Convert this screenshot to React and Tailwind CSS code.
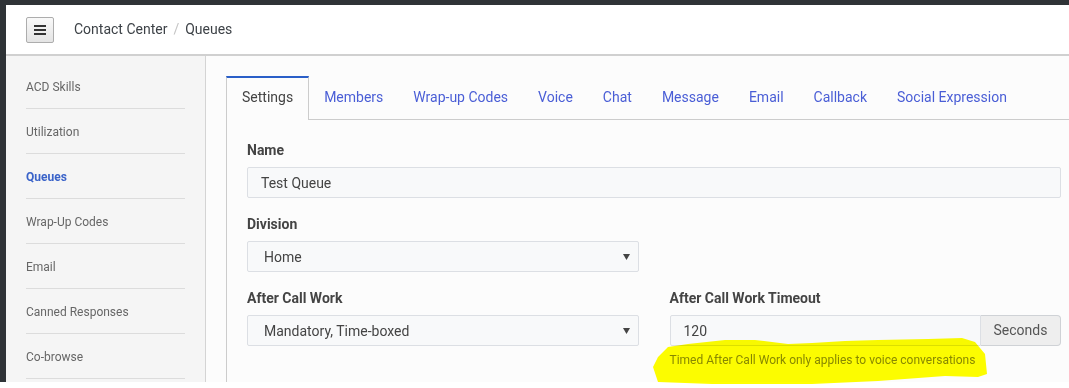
import React from "react";

const sideItems = [
  "ACD Skills",
  "Utilization",
  "Queues",
  "Wrap-Up Codes",
  "Email",
  "Canned Responses",
  "Co-browse",
];

const tabs = [
  "Members",
  "Wrap-up Codes",
  "Voice",
  "Chat",
  "Message",
  "Email",
  "Callback",
  "Social Expression",
];

function Caret() {
  return (
    <svg width="7" height="6" viewBox="0 0 7 6" className="absolute right-[8px] top-1/2 -translate-y-1/2">
      <path d="M0 0 H7 L3.5 6 Z" fill="#444" />
    </svg>
  );
}

function Label({ children }) {
  return (
    <div className="text-[14px] leading-[20px] font-bold text-[#444] mb-[7px]">
      {children}
    </div>
  );
}

export default function App() {
  return (
    <div className="relative w-[1069px] h-[388px] bg-white overflow-hidden font-['Roboto',sans-serif]">
      <div className="h-[5px] bg-[#2f3337]" />
      <div className="flex h-[377px]">
        <div className="w-[6px] bg-[#2f3337]" />
        <div className="flex-1 flex flex-col min-w-0">
          {/* Header */}
          <div className="h-[51px] shrink-0 flex items-center pl-[20px] bg-white border-b-2 border-[#d0d0d0]">
            <button className="w-[28px] h-[26px] flex items-center justify-center rounded-[2px] border border-[#adadad] bg-gradient-to-b from-[#f9f9f9] to-[#e4e4e4]">
              <svg width="12" height="10" viewBox="0 0 12 10">
                <rect x="0" y="0" width="12" height="2" fill="#333" />
                <rect x="0" y="4" width="12" height="2" fill="#333" />
                <rect x="0" y="8" width="12" height="2" fill="#333" />
              </svg>
            </button>
            <div className="ml-[20px] text-[14px] text-[#3d4247] flex items-center">
              <span>Contact Center</span>
              <span className="mx-[6px] text-[#c4c4c4]">/</span>
              <span>Queues</span>
            </div>
          </div>

          <div className="flex flex-1 min-h-0">
            {/* Sidebar */}
            <div className="w-[200px] shrink-0 bg-[#f5f5f5] border-r border-[#d4d4d4] pt-[8px]">
              {sideItems.map((item) => (
                <div
                  key={item}
                  className={
                    item === "Queues"
                      ? "mx-[20px] h-[45px] pt-[2px] flex items-center border-b border-[#dcdcdc] text-[12px] font-bold text-[#3a63c9]"
                      : "mx-[20px] h-[45px] pt-[2px] flex items-center border-b border-[#dcdcdc] text-[12px] text-[#666]"
                  }
                >
                  {item}
                </div>
              ))}
            </div>

            {/* Main */}
            <div className="flex-1 bg-[#fcfcfc] pt-[20px] pl-[20px] flex flex-col min-w-0">
              <div className="flex h-[44px] border-b border-[#cccccc] shrink-0">
                <div className="h-[44px] -mb-px px-[15px] pb-[3px] flex items-center border-t-2 border-x border-t-[#2a5fc8] border-x-[#cccccc] bg-[#fcfcfc] text-[14px] text-[#444]">
                  Settings
                </div>
                {tabs.map((t) => (
                  <div
                    key={t}
                    className="h-[43px] px-[15px] flex items-center text-[14px] text-[#4a5ed6] whitespace-nowrap first:pl-[14px]"
                  >
                    {t}
                  </div>
                ))}
              </div>

              <div className="flex-1 border-l border-[#cccccc] pl-[20px] pr-[8px] pt-[20px]">
                <div className="mb-[16px]">
                  <Label>Name</Label>
                  <div className="h-[31px] flex items-center pl-[13px] pt-[1px] rounded-[2px] border border-[#dcdfe4] bg-[#f8f9fa] text-[14px] text-[#444]">
                    Test Queue
                  </div>
                </div>

                <div className="grid grid-cols-2 gap-x-[31px]">
                  <div className="mb-[16px]">
                    <Label>Division</Label>
                    <div className="relative h-[31px] flex items-center pl-[16px] pt-[1px] rounded-[2px] border border-[#dcdfe4] bg-[#f8f9fa] text-[14px] text-[#444]">
                      Home
                      <Caret />
                    </div>
                  </div>
                  <div />

                  <div>
                    <Label>After Call Work</Label>
                    <div className="relative h-[31px] flex items-center pl-[16px] pt-[1px] rounded-[2px] border border-[#dcdfe4] bg-[#f8f9fa] text-[14px] text-[#444]">
                      Mandatory, Time-boxed
                      <Caret />
                    </div>
                  </div>
                  <div>
                    <Label>After Call Work Timeout</Label>
                    <div className="flex h-[31px]">
                      <div className="flex-1 flex items-center pl-[13px] pt-[1px] rounded-l-[2px] border border-[#dcdfe4] bg-[#f8f9fa] text-[14px] text-[#444]">
                        120
                      </div>
                      <div className="w-[80px] flex items-center justify-center rounded-r-[4px] border border-l-0 border-[#cfd2d6] bg-[#eeeeee] text-[14px] text-[#555]">
                        Seconds
                      </div>
                    </div>
                    <div className="mt-[6px] text-[12px] leading-[16px] text-[#888]">
                      Timed After Call Work only applies to voice conversations
                    </div>
                  </div>
                </div>
              </div>
            </div>
          </div>
        </div>
      </div>
      <div className="h-[6px] bg-white" />

      {/* hand-drawn yellow highlight */}
      <svg
        width="1069"
        height="388"
        className="absolute left-0 top-0 pointer-events-none mix-blend-multiply"
      >
        <path
          d="M668 347 L688 344 L725 340 L755 340 L788 344 L812 343 L845 341 L878 340 L928 339 L962 338 L975 342 L985 354 L987 374 L978 377 L945 376 L878 381 L812 384 L712 384 L658 382 L653 367 L658 357 Z"
          fill="#ffff00"
        />
      </svg>
    </div>
  );
}
